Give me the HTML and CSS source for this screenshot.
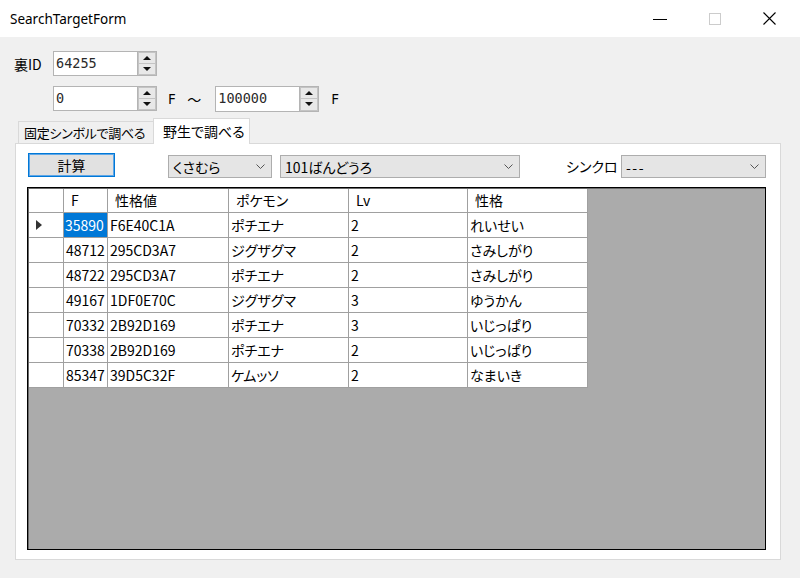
FILE: index.html
```html
<!DOCTYPE html>
<html lang="ja">
<head>
<meta charset="utf-8">
<title>SearchTargetForm</title>
<link rel="stylesheet" href="styles.css">
</head>
<body>
<div class="window">
  <div class="titlebar">
    <span class="title">SearchTargetForm</span>
    <div class="caption">
      <div class="capbtn"><svg width="14" height="14" viewBox="0 0 14 14"><line x1="0" y1="7.5" x2="14" y2="7.5" stroke="#000" stroke-width="1"/></svg></div>
      <div class="capbtn"><svg width="12" height="12" viewBox="0 0 12 12"><rect x="0.5" y="0.5" width="11" height="11" fill="none" stroke="#cccccc" stroke-width="1"/></svg></div>
      <div class="capbtn"><svg width="13" height="13" viewBox="0 0 13 13"><path d="M0.5 0.5 L12.5 12.5 M12.5 0.5 L0.5 12.5" stroke="#000" stroke-width="1.1" fill="none"/></svg></div>
    </div>
  </div>
  <div class="client">
    <div class="row row1">
      <span class="idlabel">裏ID</span>
      <div class="num">
        <div class="num-text">64255</div>
        <div class="spin"><div class="sb"><span class="up"></span></div><div class="sb"><span class="down"></span></div></div>
      </div>
    </div>
    <div class="row row2">
      <div class="num">
        <div class="num-text">0</div>
        <div class="spin"><div class="sb"><span class="up"></span></div><div class="sb"><span class="down"></span></div></div>
      </div>
      <span class="unit">F</span>
      <span class="tilde">～</span>
      <div class="num num-b">
        <div class="num-text">100000</div>
        <div class="spin"><div class="sb"><span class="up"></span></div><div class="sb"><span class="down"></span></div></div>
      </div>
      <span class="unit unit2">F</span>
    </div>
    <div class="tabstrip">
      <div class="tab tab1">固定シンボルで調べる</div>
      <div class="tab tab2 active">野生で調べる</div>
    </div>
    <div class="panel">
      <div class="toolbar">
        <div class="btn">計算</div>
        <div class="combo c1"><span>くさむら</span><svg class="chev" width="9" height="5" viewBox="0 0 9 5"><path d="M0.5 0.5 L4.5 4.5 L8.5 0.5" fill="none" stroke="#555" stroke-width="1"/></svg></div>
        <div class="combo c2"><span>101ばんどうろ</span><svg class="chev" width="9" height="5" viewBox="0 0 9 5"><path d="M0.5 0.5 L4.5 4.5 L8.5 0.5" fill="none" stroke="#555" stroke-width="1"/></svg></div>
        <span class="synclabel">シンクロ</span>
        <div class="combo c3"><span class="dash">---</span><svg class="chev" width="9" height="5" viewBox="0 0 9 5"><path d="M0.5 0.5 L4.5 4.5 L8.5 0.5" fill="none" stroke="#555" stroke-width="1"/></svg></div>
      </div>
      <div class="grid">
        <div class="table">
          <div class="cell hd rh"></div>
          <div class="cell hd">F</div>
          <div class="cell hd">性格値</div>
          <div class="cell hd">ポケモン</div>
          <div class="cell hd">Lv</div>
          <div class="cell hd">性格</div>

          <div class="cell rh"><span class="cur"></span></div>
          <div class="cell sel">35890</div>
          <div class="cell">F6E40C1A</div>
          <div class="cell">ポチエナ</div>
          <div class="cell">2</div>
          <div class="cell">れいせい</div>

          <div class="cell rh"></div>
          <div class="cell">48712</div>
          <div class="cell">295CD3A7</div>
          <div class="cell">ジグザグマ</div>
          <div class="cell">2</div>
          <div class="cell">さみしがり</div>

          <div class="cell rh"></div>
          <div class="cell">48722</div>
          <div class="cell">295CD3A7</div>
          <div class="cell">ポチエナ</div>
          <div class="cell">2</div>
          <div class="cell">さみしがり</div>

          <div class="cell rh"></div>
          <div class="cell">49167</div>
          <div class="cell">1DF0E70C</div>
          <div class="cell">ジグザグマ</div>
          <div class="cell">3</div>
          <div class="cell">ゆうかん</div>

          <div class="cell rh"></div>
          <div class="cell">70332</div>
          <div class="cell">2B92D169</div>
          <div class="cell">ポチエナ</div>
          <div class="cell">3</div>
          <div class="cell">いじっぱり</div>

          <div class="cell rh"></div>
          <div class="cell">70338</div>
          <div class="cell">2B92D169</div>
          <div class="cell">ポチエナ</div>
          <div class="cell">2</div>
          <div class="cell">いじっぱり</div>

          <div class="cell rh"></div>
          <div class="cell">85347</div>
          <div class="cell">39D5C32F</div>
          <div class="cell">ケムッソ</div>
          <div class="cell">2</div>
          <div class="cell">なまいき</div>
        </div>
      </div>
    </div>
  </div>
</div>
</body>
</html>
```
FILE: styles.css
```css
html, body {
  margin: 0;
  padding: 0;
}
body {
  width: 800px;
  height: 578px;
  overflow: hidden;
  background: #f0f0f0;
  font-family: "Noto Sans CJK JP", "Noto Sans", sans-serif;
  font-feature-settings: "palt";
  font-size: 14px;
  color: #000;
}
.window {
  width: 800px;
  height: 578px;
  display: flex;
  flex-direction: column;
}
.titlebar {
  height: 37px;
  flex: none;
  background: #fff;
  display: flex;
  align-items: center;
  padding-right: 3px;
}
.title {
  flex: 1;
  padding-left: 10px;
  font-family: "Noto Sans", sans-serif;
  font-size: 13.5px;
  color: #000;
}
.caption {
  display: flex;
  height: 37px;
}
.capbtn {
  width: 55px;
  display: flex;
  align-items: center;
  justify-content: center;
}
.client {
  flex: 1;
  display: flex;
  flex-direction: column;
  padding-top: 14px;
}
.row {
  display: flex;
  align-items: center;
  height: 25px;
}
.row1 {
  padding-left: 14px;
}
.idlabel {
  width: 39px;
  font-size: 14px;
}
.row2 {
  margin-top: 10px;
  padding-left: 53px;
  height: 25px;
}
.num {
  width: 104px;
  height: 25px;
  box-sizing: border-box;
  border: 1px solid #b4b4b4;
  background: #fff;
  display: flex;
}
.num-b {
  height: 26px;
}
.num-text {
  flex: 1;
  padding-left: 2px;
  font-family: "DejaVu Sans Mono", "Liberation Mono", monospace;
  font-size: 13.5px;
  line-height: 23px;
  color: #2a2a2a;
}
.spin {
  width: 18px;
  display: flex;
  flex-direction: column;
  border-left: 1px solid #b4b4b4;
}
.sb {
  flex: 1;
  background: #e8e8e8;
  border: 1px solid #c4c4c4;
  display: flex;
  align-items: center;
  justify-content: center;
}
.sb + .sb {
  border-top: none;
}
.up {
  width: 0;
  height: 0;
  border-left: 4px solid transparent;
  border-right: 4px solid transparent;
  border-bottom: 4px solid #111;
}
.down {
  width: 0;
  height: 0;
  border-left: 4px solid transparent;
  border-right: 4px solid transparent;
  border-top: 4px solid #111;
}
.unit {
  margin-left: 11px;
  font-family: "Noto Sans", sans-serif;
  font-size: 14px;
}
.unit2 {
  margin-left: 12px;
}
.tilde {
  margin-left: 12px;
  margin-right: 14px;
  font-size: 14px;
}
.tabstrip {
  margin-top: 7px;
  height: 25px;
  display: flex;
  align-items: flex-end;
  padding-left: 18px;
}
.tab {
  height: 22px;
  box-sizing: border-box;
  border: 1px solid #d9d9d9;
  border-bottom: none;
  background: #f0f0f0;
  font-size: 14px;
  line-height: 21px;
  padding-left: 5px;
  white-space: nowrap;
  overflow: hidden;
}
.tab1 {
  width: 135px;
  border-right: none;
  font-size: 13px;
  letter-spacing: -0.3px;
}
.tab2 {
  width: 97px;
}
.active {
  height: 26px;
  margin-bottom: -1px;
  background: #fff;
  padding-left: 9px;
  line-height: 24px;
  position: relative;
  z-index: 1;
}
.panel {
  margin-left: 15px;
  width: 766px;
  height: 417px;
  box-sizing: border-box;
  border: 1px solid #d9d9d9;
  background: #fff;
  padding: 9px 14px 9px 11px;
  display: flex;
  flex-direction: column;
}
.toolbar {
  display: flex;
  align-items: flex-start;
  height: 25px;
  flex: none;
}
.btn {
  margin-left: 1px;
  width: 87px;
  height: 24px;
  box-sizing: border-box;
  border: 1px solid #0078d7;
  box-shadow: inset 0 0 0 1px #5fa6e6;
  background: #e1e1e1;
  text-align: center;
  line-height: 22px;
  font-size: 14px;
}
.combo {
  margin-top: 2px;
  height: 23px;
  box-sizing: border-box;
  border: 1px solid #adadad;
  background: #e5e5e5;
  display: flex;
  align-items: center;
  padding-left: 4px;
  padding-right: 6px;
  font-size: 14px;
}
.combo span {
  flex: 1;
  white-space: nowrap;
}
.combo .dash {
  letter-spacing: 1.5px;
}
.chev {
  flex: none;
}
.c1 {
  margin-left: 53px;
  width: 104px;
}
.c2 {
  margin-left: 8px;
  width: 240px;
}
.c3 {
  margin-left: auto;
  width: 145px;
}
.synclabel {
  margin-left: 46px;
  margin-top: 3px;
  font-size: 14px;
}
.grid {
  margin-top: 9px;
  flex: 1;
  box-sizing: border-box;
  border: 1px solid #000;
  box-shadow: inset 1px 1px 0 #6a6a6a;
  background: #ababab;
  padding: 1px 0 0 1px;
}
.table {
  display: inline-grid;
  grid-template-columns: 34px 43px 120px 119px 118px 119px;
  grid-template-rows: 23px;
  grid-auto-rows: 24px;
  gap: 1px;
  background: #a0a0a0;
  padding: 0 1px 1px 0;
}
.cell {
  background: #fff;
  padding-left: 2px;
  font-size: 14px;
  line-height: 24px;
  white-space: nowrap;
  overflow: hidden;
}
.hd {
  padding-left: 7px;
  line-height: 23px;
}
.rh {
  display: flex;
  align-items: center;
  padding-left: 7px;
}
.cur {
  width: 0;
  height: 0;
  border-top: 5px solid transparent;
  border-bottom: 5px solid transparent;
  border-left: 6px solid #333;
}
.sel {
  background: #0078d7;
  color: #fff;
  padding-left: 1px;
}
```
